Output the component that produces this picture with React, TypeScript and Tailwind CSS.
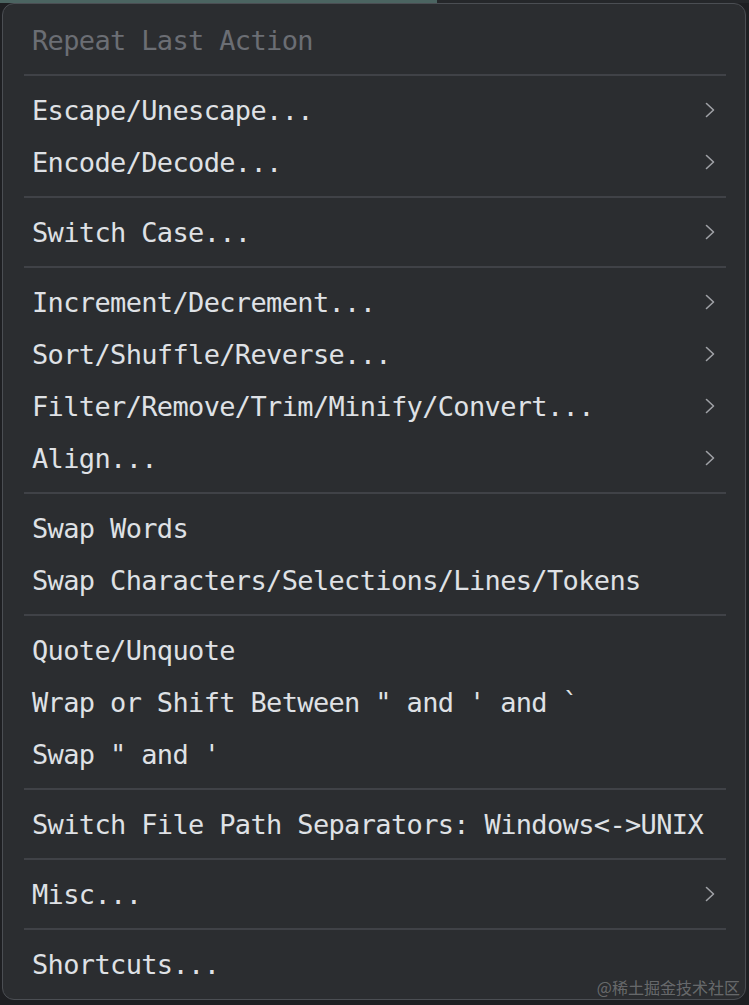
const groups: { label: string; sub?: boolean; disabled?: boolean }[][] = [
  [{ label: "Repeat Last Action", disabled: true }],
  [
    { label: "Escape/Unescape...", sub: true },
    { label: "Encode/Decode...", sub: true },
  ],
  [{ label: "Switch Case...", sub: true }],
  [
    { label: "Increment/Decrement...", sub: true },
    { label: "Sort/Shuffle/Reverse...", sub: true },
    { label: "Filter/Remove/Trim/Minify/Convert...", sub: true },
    { label: "Align...", sub: true },
  ],
  [{ label: "Swap Words" }, { label: "Swap Characters/Selections/Lines/Tokens" }],
  [
    { label: "Quote/Unquote" },
    { label: "Wrap or Shift Between \" and ' and `" },
    { label: "Swap \" and '" },
  ],
  [{ label: "Switch File Path Separators: Windows<->UNIX" }],
  [{ label: "Misc...", sub: true }],
  [{ label: "Shortcuts..." }],
];

function Chevron() {
  return (
    <svg width="10" height="16" viewBox="0 0 10 16" fill="none" stroke="#9fa1a6" strokeWidth={1.6} strokeLinecap="round" strokeLinejoin="round">
      <path d="M1.5 1.5L8.5 8l-7 6.5" />
    </svg>
  );
}

export default function App() {
  return (
    <div className="w-[749px] h-[1005px] bg-[#1e1f22] overflow-hidden flex flex-col">
      <div className="h-[3px] flex shrink-0">
        <div className="w-[437px] bg-[#4b6461]" />
        <div className="flex-1 bg-[#25272a]" />
      </div>
      <div
        className="relative ml-[2px] w-[744px] h-[997px] rounded-[12px] border border-[#4b4e53] bg-[#2b2d30] pt-[10px] pb-[9px] flex flex-col"
        style={{ fontFamily: '"DejaVu Sans Mono", monospace' }}
      >
        {groups.map((g, gi) => (
          <div key={gi}>
            {gi > 0 && (
              <div className="h-[18px] flex items-center pl-[21px] pr-[19px]">
                <div className="h-[2px] w-full bg-[#404247]" />
              </div>
            )}
            {g.map((item) => (
              <div key={item.label} className="h-[52px] flex items-center justify-between pl-[29px] pr-[30px]">
                <span
                  className={
                    "text-[27px] leading-none tracking-[-0.65px] whitespace-pre " +
                    (item.disabled ? "text-[#6b6e74]" : "text-[#dfe1e5]")
                  }
                >
                  {item.label}
                </span>
                {item.sub && <Chevron />}
              </div>
            ))}
          </div>
        ))}
        <span
          className="absolute right-[5px] bottom-[4px] text-[16px] leading-none text-white/30"
          style={{ fontFamily: '"Noto Sans CJK SC", sans-serif' }}
        >
          @稀土掘金技术社区
        </span>
      </div>
    </div>
  );
}
